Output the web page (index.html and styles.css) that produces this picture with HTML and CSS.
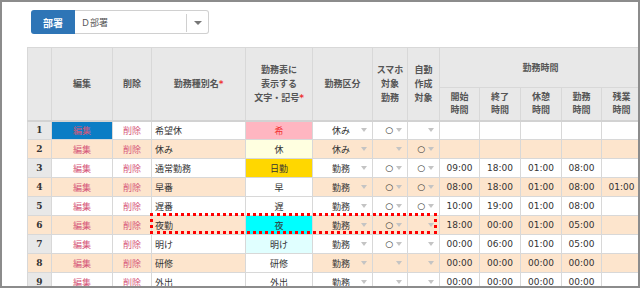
FILE: index.html
```html
<!DOCTYPE html>
<html lang="ja">
<head>
    <meta charset="UTF-8">
    <title>勤務種別</title>
    <link rel="stylesheet" href="styles.css">
</head>
<body>
<div class="frame">
    <div class="toolbar">
        <span class="dept-label">部署</span>
        <div class="dept-select">
            <span class="dept-value">Ｄ部署</span>
            <span class="dept-caret"><i class="caret dark"></i></span>
        </div>
    </div>

    <div class="table-wrap">
        <table class="shift-table">
            <colgroup>
                <col class="c-no"><col class="c-edit"><col class="c-del"><col class="c-name">
                <col class="c-mark"><col class="c-kind"><col class="c-phone"><col class="c-auto">
                <col class="c-time"><col class="c-time2"><col class="c-time2"><col class="c-time"><col class="c-time">
            </colgroup>
            <thead>
                <tr class="head-top">
                    <th rowspan="2"></th>
                    <th rowspan="2">編集</th>
                    <th rowspan="2">削除</th>
                    <th rowspan="2">勤務種別名<span class="req">*</span></th>
                    <th rowspan="2" class="split">勤務表に<br>表示する<br>文字・記号<span class="req">*</span></th>
                    <th rowspan="2">勤務区分</th>
                    <th rowspan="2">スマホ<br>対象<br>勤務</th>
                    <th rowspan="2">自動<br>作成<br>対象</th>
                    <th colspan="5">勤務時間</th>
                </tr>
                <tr class="head-sub">
                    <th>開始<br>時間</th>
                    <th>終了<br>時間</th>
                    <th>休憩<br>時間</th>
                    <th>勤務<br>時間</th>
                    <th>残業<br>時間</th>
                </tr>
            </thead>
            <tbody>
                <tr>
                    <td class="no">1</td>
                    <td class="act selected">編集</td>
                    <td class="act">削除</td>
                    <td class="name">希望休</td>
                    <td class="mark split pink">希</td>
                    <td><div class="pick kind"><span>休み</span><i class="caret"></i></div></td>
                    <td><div class="pick"><span>○</span><i class="caret"></i></div></td>
                    <td><div class="pick"><i class="caret"></i></div></td>
                    <td></td><td></td><td></td><td></td><td></td>
                </tr>
                <tr class="alt">
                    <td class="no">2</td>
                    <td class="act">編集</td>
                    <td class="act">削除</td>
                    <td class="name">休み</td>
                    <td class="mark split cream">休</td>
                    <td><div class="pick kind"><span>休み</span><i class="caret"></i></div></td>
                    <td><div class="pick"><i class="caret"></i></div></td>
                    <td><div class="pick"><span>○</span><i class="caret"></i></div></td>
                    <td></td><td></td><td></td><td></td><td></td>
                </tr>
                <tr>
                    <td class="no">3</td>
                    <td class="act">編集</td>
                    <td class="act">削除</td>
                    <td class="name">通常勤務</td>
                    <td class="mark split gold">日勤</td>
                    <td><div class="pick kind"><span>勤務</span><i class="caret"></i></div></td>
                    <td><div class="pick"><span>○</span><i class="caret"></i></div></td>
                    <td><div class="pick"><span>○</span><i class="caret"></i></div></td>
                    <td class="time">09:00</td><td class="time">18:00</td><td class="time">01:00</td><td class="time">08:00</td><td class="time"></td>
                </tr>
                <tr class="alt">
                    <td class="no">4</td>
                    <td class="act">編集</td>
                    <td class="act">削除</td>
                    <td class="name">早番</td>
                    <td class="mark split">早</td>
                    <td><div class="pick kind"><span>勤務</span><i class="caret"></i></div></td>
                    <td><div class="pick"><span>○</span><i class="caret"></i></div></td>
                    <td><div class="pick"><span>○</span><i class="caret"></i></div></td>
                    <td class="time">08:00</td><td class="time">18:00</td><td class="time">01:00</td><td class="time">08:00</td><td class="time">01:00</td>
                </tr>
                <tr>
                    <td class="no">5</td>
                    <td class="act">編集</td>
                    <td class="act">削除</td>
                    <td class="name">遅番</td>
                    <td class="mark split">遅</td>
                    <td><div class="pick kind"><span>勤務</span><i class="caret"></i></div></td>
                    <td><div class="pick"><span>○</span><i class="caret"></i></div></td>
                    <td><div class="pick"><span>○</span><i class="caret"></i></div></td>
                    <td class="time">10:00</td><td class="time">19:00</td><td class="time">01:00</td><td class="time">08:00</td><td class="time"></td>
                </tr>
                <tr class="alt">
                    <td class="no">6</td>
                    <td class="act">編集</td>
                    <td class="act">削除</td>
                    <td class="name">夜勤</td>
                    <td class="mark split cyan">夜</td>
                    <td><div class="pick kind"><span>勤務</span><i class="caret"></i></div></td>
                    <td><div class="pick"><span>○</span><i class="caret"></i></div></td>
                    <td><div class="pick"><i class="caret"></i></div></td>
                    <td class="time">18:00</td><td class="time">00:00</td><td class="time">01:00</td><td class="time">05:00</td><td class="time"></td>
                </tr>
                <tr>
                    <td class="no">7</td>
                    <td class="act">編集</td>
                    <td class="act">削除</td>
                    <td class="name">明け</td>
                    <td class="mark split ice">明け</td>
                    <td><div class="pick kind"><span>勤務</span><i class="caret"></i></div></td>
                    <td><div class="pick"><span>○</span><i class="caret"></i></div></td>
                    <td><div class="pick"><i class="caret"></i></div></td>
                    <td class="time">00:00</td><td class="time">06:00</td><td class="time">01:00</td><td class="time">05:00</td><td class="time"></td>
                </tr>
                <tr class="alt">
                    <td class="no">8</td>
                    <td class="act">編集</td>
                    <td class="act">削除</td>
                    <td class="name">研修</td>
                    <td class="mark split">研修</td>
                    <td><div class="pick kind"><span>勤務</span><i class="caret"></i></div></td>
                    <td><div class="pick"><i class="caret"></i></div></td>
                    <td><div class="pick"><i class="caret"></i></div></td>
                    <td class="time">00:00</td><td class="time">00:00</td><td class="time">00:00</td><td class="time">00:00</td><td class="time"></td>
                </tr>
                <tr>
                    <td class="no">9</td>
                    <td class="act">編集</td>
                    <td class="act">削除</td>
                    <td class="name">外出</td>
                    <td class="mark split">外出</td>
                    <td><div class="pick kind"><span>勤務</span><i class="caret"></i></div></td>
                    <td><div class="pick"><i class="caret"></i></div></td>
                    <td><div class="pick"><i class="caret"></i></div></td>
                    <td class="time">00:00</td><td class="time">00:00</td><td class="time">00:00</td><td class="time">00:00</td><td class="time"></td>
                </tr>
            </tbody>
        </table>
        <!-- highlight around the night shift row -->
        <div class="focus-box"></div>
    </div>
</div>
</body>
</html>
```

FILE: styles.css
```css
body {
    margin: 0;
    font-family: "DejaVu Sans", "Noto Sans CJK JP", sans-serif;
    font-size: 9px;
    color: #333;
    background: #fff;
}

.frame {
    width: 640px;
    height: 288px;
    box-sizing: border-box;
    border: 2px solid #8c8c8c;
    padding: 8px 0 0 25px;
    overflow: hidden;
    background: #fff;
}

/* department picker */
.toolbar {
    display: flex;
    height: 24px;
    margin-left: 4px;
}

.dept-label {
    width: 44px;
    display: flex;
    align-items: center;
    justify-content: center;
    background-color: #2e75b6;
    color: #fff;
    font-weight: bold;
    font-size: 10px;
    border-radius: 3px 0 0 3px;
}

.dept-select {
    width: 134px;
    box-sizing: border-box;
    display: flex;
    align-items: center;
    border: 1px solid #d0d0d0;
    border-left: none;
    border-radius: 0 3px 3px 0;
}

.dept-value {
    flex: 1;
    padding-left: 6px;
    color: #555;
}

.dept-caret {
    width: 21px;
    height: 18px;
    margin-top: 3px;
    display: flex;
    align-items: center;
    justify-content: center;
    border-left: 1px solid #d0d0d0;
    align-self: flex-start;
}

.caret {
    display: inline-block;
    width: 0;
    height: 0;
    border-left: 3px solid transparent;
    border-right: 3px solid transparent;
    border-top: 4px solid #c4c4c4;
}

.caret.dark {
    border-left-width: 4px;
    border-right-width: 4px;
    border-top: 4px solid #777;
}

/* table */
.table-wrap {
    position: relative;
    margin-top: 13px;
}

.shift-table {
    border-collapse: collapse;
    table-layout: fixed;
    width: 614px;
}

.c-no { width: 24px; }
.c-edit { width: 61px; }
.c-del { width: 39px; }
.c-name { width: 94px; }
.c-mark { width: 67px; }
.c-kind { width: 60px; }
.c-phone { width: 35px; }
.c-auto { width: 32px; }
.c-time { width: 40px; }
.c-time2 { width: 41px; }

.shift-table th,
.shift-table td {
    border: 1px solid #d8d8d8;
    padding: 0;
    white-space: nowrap;
    overflow: hidden;
}

.shift-table th {
    background-color: #e8e8e8;
    color: #555;
    font-weight: bold;
    line-height: 14px;
    text-align: center;
    vertical-align: middle;
}

.head-top { height: 40px; }
.head-sub { height: 33px; }
.head-sub th { line-height: 13px; }

.shift-table thead tr:last-child th,
.shift-table thead th[rowspan] {
    border-bottom: 2px solid #d2d2d2;
}

.req {
    color: #ee3333;
}

.shift-table tbody tr {
    height: 19px;
}

.shift-table td {
    background-color: #fff;
    vertical-align: middle;
}

.shift-table tr.alt td {
    background-color: #fde5cd;
}

.shift-table .split {
    border-left: 1px solid #8f8f8f;
}

.shift-table td.no {
    background-color: #e8e8e8;
    font-family: "DejaVu Serif", serif;
    font-weight: bold;
    font-size: 9px;
    text-align: center;
    color: #333;
}

.act {
    text-align: center;
    color: #d6587a;
}

.shift-table td.selected {
    background-color: #0b7dc5;
}

.name {
    padding-left: 3px !important;
}

.mark {
    text-align: center;
}

/* symbol cells keep their own colour, not the row stripe */
.shift-table tr td.mark { background-color: #fff; }
.shift-table tr td.pink { background-color: #ffb6c1; color: #f23030; }
.shift-table tr td.cream { background-color: #ffffe0; }
.shift-table tr td.gold { background-color: #ffd700; }
.shift-table tr td.cyan { background-color: #00ffff; }
.shift-table tr td.ice { background-color: #e0ffff; }

.pick {
    display: flex;
    align-items: center;
    justify-content: flex-end;
    gap: 3px;
    padding-right: 5px;
}

.pick.kind span {
    margin-right: 8px;
}

.time {
    text-align: center;
    color: #333;
}

.focus-box {
    position: absolute;
    left: 123px;
    top: 166px;
    width: 287px;
    height: 21px;
    box-sizing: border-box;
    border: 3px dotted #ff0000;
}
```
